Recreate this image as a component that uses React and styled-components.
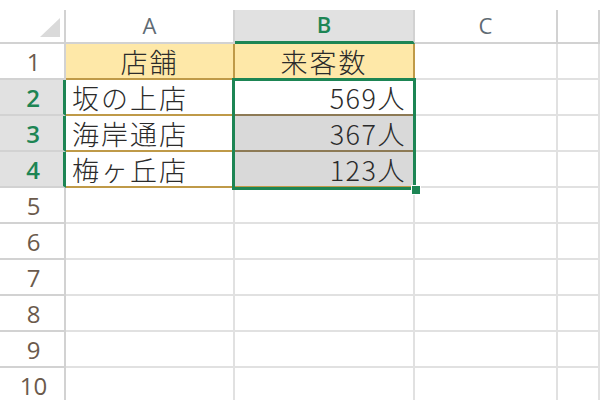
import React from "react";
import styled, { createGlobalStyle } from "styled-components";

const GRID = "#e1e1e1";
const HEAD_LINE = "#d2d2d2";
const GREEN = "#1d8554";
const GOLD = "#bf9a48";
const GOLD_DARK = "#8d7a55";

const columns = ["A", "B", "C", ""];

const rows = [
    { n: 1, a: "店舗", b: "来客数", head: true },
    { n: 2, a: "坂の上店", b: "569人", active: true },
    { n: 3, a: "海岸通店", b: "367人" },
    { n: 4, a: "梅ヶ丘店", b: "123人" },
];

function App() {
    const empty = [5, 6, 7, 8, 9, 10];

    return (
        <>
            <GlobalStyle />
            <Page>
                <Sheet>
                    <Corner>
                        <Triangle />
                    </Corner>
                    {columns.map((c) => (
                        <ColHead key={c || "d"} $selected={c === "B"}>
                            {c}
                        </ColHead>
                    ))}

                    {rows.map((r) => (
                        <React.Fragment key={r.n}>
                            <RowHead $selected={!r.head}>{r.n}</RowHead>
                            <Cell
                                $fill={r.head ? "#fee8a8" : "#fff"}
                                $bottom={GOLD}
                                $right={r.head ? GOLD : GRID}
                                $align={r.head ? "center" : "left"}
                            >
                                {r.a}
                            </Cell>
                            <Cell
                                $fill={
                                    r.head ? "#fee8a8" : r.active ? "#fff" : "#d9d9d9"
                                }
                                $bottom={r.head || r.n === 4 ? GOLD : GOLD_DARK}
                                $right={r.head ? GOLD : GRID}
                                $align={r.head ? "center" : "right"}
                            >
                                {r.head ? r.b : <Amount>{r.b}</Amount>}
                            </Cell>
                            <Cell />
                            <Cell />
                        </React.Fragment>
                    ))}

                    {empty.map((n) => (
                        <React.Fragment key={n}>
                            <RowHead>{n}</RowHead>
                            <Cell />
                            <Cell />
                            <Cell />
                            <Cell />
                        </React.Fragment>
                    ))}

                    <Selection>
                        <FillHandle />
                    </Selection>
                </Sheet>
            </Page>
        </>
    );
}

const GlobalStyle = createGlobalStyle`
    html, body {
        margin: 0;
        padding: 0;
        background: #fff;
        overflow: hidden;
    }
`;

const Page = styled.div`
    width: 600px;
    height: 400px;
    padding-top: 10px;
    box-sizing: border-box;
    overflow: hidden;
    background: #fff;
`;

const Sheet = styled.div`
    position: relative;
    display: grid;
    grid-template-columns: 66px 169px 180px 143px 1fr;
    grid-template-rows: 34px;
    grid-auto-rows: 36px;
    font-family: "Noto Sans CJK JP", "Noto Sans", sans-serif;
`;

const Corner = styled.div`
    display: flex;
    align-items: flex-end;
    justify-content: flex-end;
    padding: 0 4px 5px 0;
    box-sizing: border-box;
    border-right: 2px solid ${HEAD_LINE};
    border-bottom: 2px solid ${HEAD_LINE};
`;

const Triangle = styled.div`
    width: 0;
    height: 0;
    border-left: 20px solid transparent;
    border-bottom: 19px solid #dadada;
`;

const ColHead = styled.div`
    display: flex;
    align-items: center;
    justify-content: center;
    padding-bottom: 3px;
    box-sizing: border-box;
    font-family: "Open Sans", "Noto Sans", sans-serif;
    font-size: 22px;
    color: ${(p) => (p.$selected ? GREEN : "#5f6b74")};
    font-weight: ${(p) => (p.$selected ? 600 : 400)};
    background: ${(p) => (p.$selected ? "#e1e1e1" : "#fff")};
    border-right: 2px solid ${HEAD_LINE};
    border-bottom: ${(p) =>
        p.$selected ? `3px solid ${GREEN}` : `2px solid ${HEAD_LINE}`};
`;

const RowHead = styled.div`
    display: flex;
    align-items: center;
    justify-content: center;
    padding-left: 3px;
    box-sizing: border-box;
    font-family: "Open Sans", "Noto Sans", sans-serif;
    font-size: 24px;
    color: ${(p) => (p.$selected ? GREEN : "#6b5a4c")};
    font-weight: ${(p) => (p.$selected ? 600 : 400)};
    background: ${(p) => (p.$selected ? "#e1e1e1" : "#fff")};
    border-right: ${(p) =>
        p.$selected ? `3px solid ${GREEN}` : `2px solid ${HEAD_LINE}`};
    border-bottom: 2px solid ${HEAD_LINE};
`;

const Cell = styled.div`
    display: flex;
    align-items: center;
    justify-content: ${(p) =>
        p.$align === "right"
            ? "flex-end"
            : p.$align === "center"
            ? "center"
            : "flex-start"};
    padding: 0 6px 0 6px;
    box-sizing: border-box;
    background: ${(p) => p.$fill || "#fff"};
    border-right: 2px solid ${(p) => p.$right || GRID};
    border-bottom: 2px solid ${(p) => p.$bottom || GRID};
    font-size: 27px;
    font-weight: 300;
    letter-spacing: 2px;
    color: #2b2b2b;
    white-space: nowrap;
`;

const Amount = styled.span`
    letter-spacing: 1.5px;
    padding-right: 1px;
`;

const Selection = styled.div`
    position: absolute;
    left: 232px;
    top: 68px;
    width: 184px;
    height: 112px;
    box-sizing: border-box;
    border: 3px solid ${GREEN};
    pointer-events: none;
`;

const FillHandle = styled.div`
    position: absolute;
    right: -8px;
    bottom: -8px;
    width: 8px;
    height: 8px;
    background: ${GREEN};
    border: 1px solid #fff;
`;

export default App;
